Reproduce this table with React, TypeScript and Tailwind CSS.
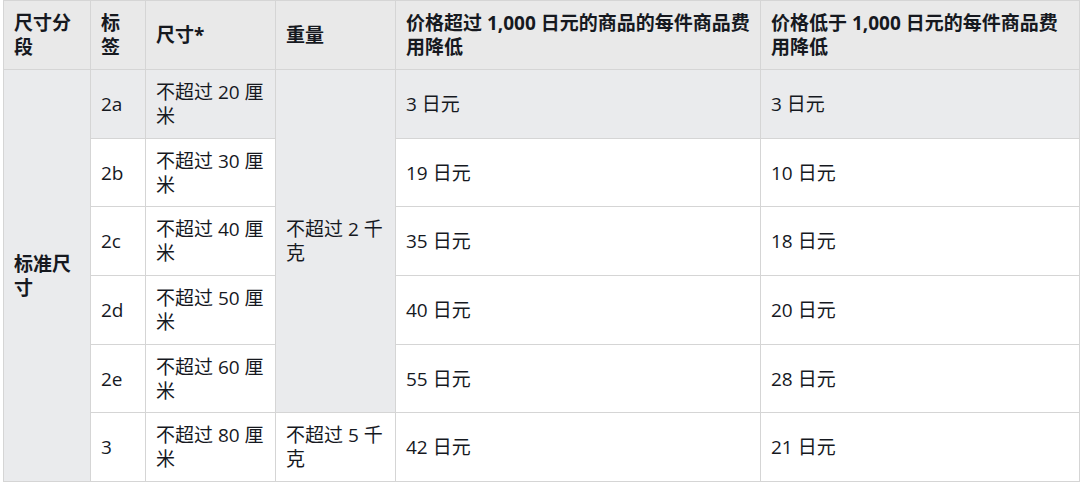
import React from 'react';

const rows = [
  { tag: '2a', size: '不超过 20 厘米', high: '3 日元', low: '3 日元' },
  { tag: '2b', size: '不超过 30 厘米', high: '19 日元', low: '10 日元' },
  { tag: '2c', size: '不超过 40 厘米', high: '35 日元', low: '18 日元' },
  { tag: '2d', size: '不超过 50 厘米', high: '40 日元', low: '20 日元' },
  { tag: '2e', size: '不超过 60 厘米', high: '55 日元', low: '28 日元' },
  { tag: '3', size: '不超过 80 厘米', high: '42 日元', low: '21 日元' },
];

const cell = 'border border-[#d5d5d5] px-[10px] py-0 text-left align-middle';

export default function App() {
  return (
    <div className="w-[1080px] h-[483px] bg-white pl-[3px] text-[#16191f] text-[19px] leading-[24px] [font-family:'Open_Sans','Noto_Sans_CJK_SC',sans-serif]">
      <table className="border-collapse table-fixed w-[1076px]">
        <colgroup>
          <col className="w-[87px]" />
          <col className="w-[55px]" />
          <col className="w-[130px]" />
          <col className="w-[120px]" />
          <col className="w-[365px]" />
          <col className="w-[319px]" />
        </colgroup>
        <thead>
          <tr className="h-[69px] bg-[#e9e9e9]">
            <th className={`${cell} font-bold`}>尺寸分段</th>
            <th className={`${cell} font-bold`}>标签</th>
            <th className={`${cell} font-bold`}>尺寸*</th>
            <th className={`${cell} font-bold`}>重量</th>
            <th className={`${cell} font-bold`}>价格超过 1,000 日元的商品的每件商品费用降低</th>
            <th className={`${cell} font-bold`}>价格低于 1,000 日元的每件商品费用降低</th>
          </tr>
        </thead>
        <tbody>
          {rows.map((r, i) => (
            <tr key={r.tag} className={i === 0 ? 'h-[68.7px] bg-[#eaebed]' : 'h-[68.7px] bg-white'}>
              {i === 0 && (
                <td rowSpan={6} className={`${cell} bg-[#eaebed] font-bold`}>
                  标准尺寸
                </td>
              )}
              <td className={cell}>{r.tag}</td>
              <td className={cell}>{r.size}</td>
              {i === 0 && (
                <td rowSpan={5} className={`${cell} bg-[#eaebed]`}>
                  不超过 2 千克
                </td>
              )}
              {i === 5 && <td className={cell}>不超过 5 千克</td>}
              <td className={cell}>{r.high}</td>
              <td className={cell}>{r.low}</td>
            </tr>
          ))}
        </tbody>
      </table>
    </div>
  );
}
